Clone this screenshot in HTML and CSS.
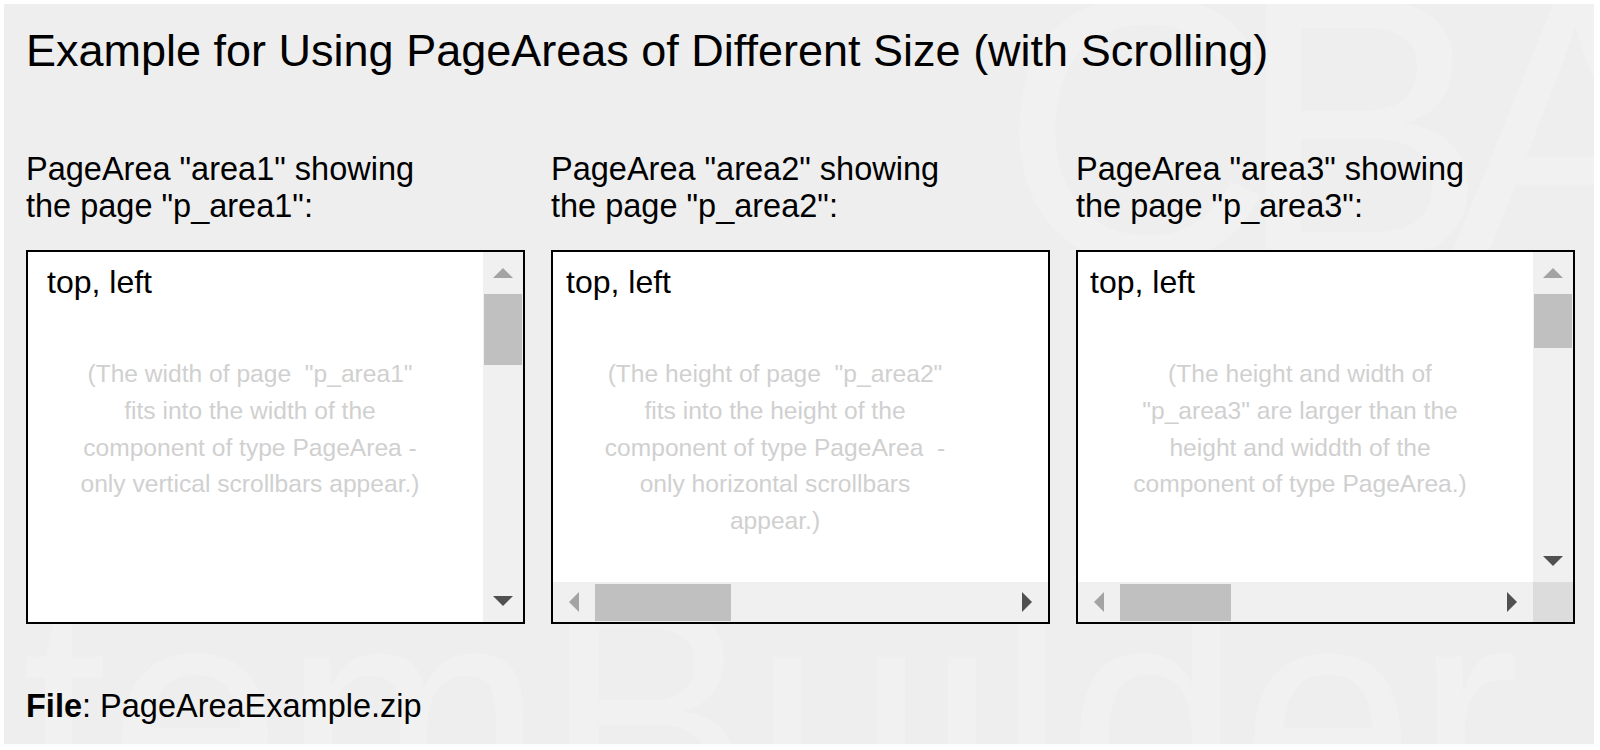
FILE: index.html
```html
<!DOCTYPE html>
<html lang="en">
<head>
<meta charset="utf-8">
<title>PageArea Example</title>
<link rel="stylesheet" href="styles.css">
</head>
<body>
<div class="panel">
  <div class="wm wm-cba" aria-hidden="true"></div>
  <div class="wm wm-ib" aria-hidden="true"></div>

  <div class="content">
    <h1 class="title">Example for Using PageAreas of Different Size (with Scrolling)</h1>

    <div class="columns">
      <div class="col">
        <p class="caption">PageArea "area1" showing<br>the page "p_area1":</p>
        <div class="box box-v">
          <div class="page page-1">
            <div class="corner-text">top, left</div>
            <div class="note">(The width of page &nbsp;"p_area1"<br>fits into the width of the<br>component of type PageArea -<br>only vertical scrollbars appear.)</div>
          </div>
          <div class="vbar">
            <div class="btn"><span class="tri tri-up off"></span></div>
            <div class="thumb-v thumb-1"></div>
            <div class="fill"></div>
            <div class="btn"><span class="tri tri-down"></span></div>
          </div>
        </div>
      </div>

      <div class="col">
        <p class="caption">PageArea "area2" showing<br>the page "p_area2":</p>
        <div class="box box-h">
          <div class="page page-2">
            <div class="corner-text">top, left</div>
            <div class="note">(The height of page &nbsp;"p_area2"<br>fits into the height of the<br>component of type PageArea &nbsp;-<br>only horizontal scrollbars<br>appear.)</div>
          </div>
          <div class="hbar">
            <div class="btn"><span class="tri tri-left off"></span></div>
            <div class="thumb-h thumb-2"></div>
            <div class="fill"></div>
            <div class="btn"><span class="tri tri-right"></span></div>
          </div>
        </div>
      </div>

      <div class="col">
        <p class="caption">PageArea "area3" showing<br>the page "p_area3":</p>
        <div class="box box-vh">
          <div class="page page-3">
            <div class="corner-text">top, left</div>
            <div class="note">(The height and width of<br>"p_area3" are larger than the<br>height and widdth of the<br>component of type PageArea.)</div>
          </div>
          <div class="vbar">
            <div class="btn"><span class="tri tri-up off"></span></div>
            <div class="thumb-v thumb-3v"></div>
            <div class="fill"></div>
            <div class="btn"><span class="tri tri-down"></span></div>
          </div>
          <div class="hbar">
            <div class="btn"><span class="tri tri-left off"></span></div>
            <div class="thumb-h thumb-3h"></div>
            <div class="fill"></div>
            <div class="btn"><span class="tri tri-right"></span></div>
          </div>
          <div class="corner"></div>
        </div>
      </div>
    </div>

    <p class="file"><b>File</b>: PageAreaExample.zip</p>
  </div>
</div>
</body>
</html>
```

FILE: styles.css
```css
html, body {
  margin: 0;
  padding: 0;
  background: #ffffff;
}

body {
  font-family: "Liberation Sans", Arial, sans-serif;
  color: #000;
}

.panel {
  position: relative;
  overflow: hidden;
  margin: 4px;
  width: 1590px;
  height: 740px;
  background: #eeeeee;
  box-sizing: border-box;
  padding: 21px 22px 0 22px;
}

/* faint background watermark (decorative) */
.wm {
  position: absolute;
  z-index: 0;
  pointer-events: none;
}

.wm::before {
  display: block;
  color: #f1f1f1;
  font-family: "Liberation Sans", Arial, sans-serif;
  line-height: 1;
  white-space: nowrap;
}

.wm-cba {
  left: 996px;
  top: -64px;
}

.wm-cba::before {
  content: "CBA";
  font-size: 380px;
  letter-spacing: -40px;
}

.wm-ib {
  left: -70px;
  top: 548px;
}

.wm-ib::before {
  content: "ItemBuilder";
  font-size: 330px;
  transform: scaleX(0.95);
  transform-origin: left top;
}

.content {
  position: relative;
  z-index: 1;
}

.title {
  margin: 0;
  font-size: 45px;
  font-weight: normal;
  line-height: 1.149;
}

.columns {
  margin-top: 74px;
  display: grid;
  grid-template-columns: 499px 499px 499px;
  column-gap: 26px;
}

.caption {
  margin: 0 0 26px 0;
  font-size: 32.5px;
  line-height: 36.8px;
}

.box {
  width: 499px;
  height: 374px;
  box-sizing: border-box;
  border: 2px solid #000;
  background: #fff;
  display: grid;
  overflow: hidden;
}

.box-v {
  grid-template-columns: 1fr 40px;
  grid-template-rows: 1fr;
}

.box-h {
  grid-template-columns: 1fr;
  grid-template-rows: 1fr 40px;
}

.box-vh {
  grid-template-columns: 1fr 40px;
  grid-template-rows: 1fr 40px;
}

.page {
  overflow: hidden;
  padding-top: 12px;
  padding-left: 13px;
}

.page-1 {
  padding-left: 19px;
}

.page-3 {
  padding-left: 12px;
}

.corner-text {
  font-size: 32px;
  line-height: 36.8px;
}

.note {
  width: 444px;
  margin-top: 55px;
  margin-left: -13px;
  text-align: center;
  font-size: 24.6px;
  line-height: 36.7px;
  color: #d0d0d0;
  white-space: nowrap;
}

.page-1 .note {
  margin-left: -19px;
}

.page-3 .note {
  margin-left: -12px;
}

/* scrollbars */
.vbar {
  background: #f0f0f0;
  display: flex;
  flex-direction: column;
}

.hbar {
  background: #f0f0f0;
  display: flex;
  flex-direction: row;
}

.vbar .btn {
  height: 42px;
  flex: none;
  display: flex;
  align-items: center;
  justify-content: center;
}

.hbar .btn {
  width: 42px;
  flex: none;
  display: flex;
  align-items: center;
  justify-content: center;
}

.fill {
  flex: 1;
}

.thumb-v {
  flex: none;
  margin: 0 1px;
  background: #c0c0c0;
}

.thumb-h {
  flex: none;
  margin: 2px 0 1px 0;
  background: #c0c0c0;
}

.thumb-1 { height: 71px; }
.thumb-3v { height: 54px; }
.thumb-2 { width: 136px; }
.thumb-3h { width: 111px; }

.corner {
  background: #dcdcdc;
}

.tri {
  width: 0;
  height: 0;
  display: block;
}

.tri-up {
  border-left: 10px solid transparent;
  border-right: 10px solid transparent;
  border-bottom: 10px solid #505050;
}

.tri-down {
  border-left: 10px solid transparent;
  border-right: 10px solid transparent;
  border-top: 10px solid #505050;
}

.tri-left {
  border-top: 10px solid transparent;
  border-bottom: 10px solid transparent;
  border-right: 10px solid #505050;
}

.tri-right {
  border-top: 10px solid transparent;
  border-bottom: 10px solid transparent;
  border-left: 10px solid #505050;
}

.tri-up.off { border-bottom-color: #a3a3a3; }
.tri-left.off { border-right-color: #a3a3a3; }

.file {
  margin: 0;
  position: absolute;
  left: 0;
  top: 663px;
  font-size: 32.5px;
  line-height: 36.8px;
}
```
